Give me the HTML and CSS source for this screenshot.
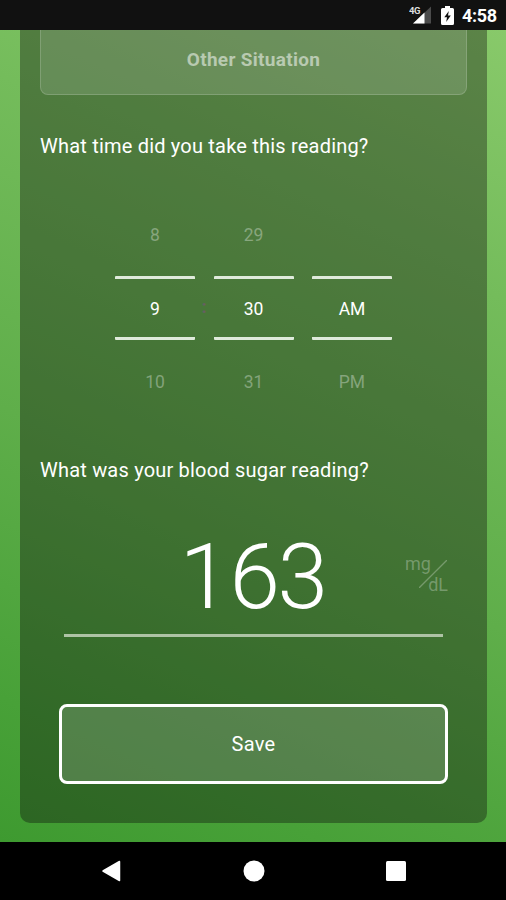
FILE: index.html
```html
<!DOCTYPE html>
<html lang="en">
<head>
<meta charset="utf-8">
<title>Blood sugar reading</title>
<link rel="stylesheet" href="styles.css">
</head>
<body>
<header class="status">
  <svg class="signal" width="24" height="20" viewBox="0 0 24 20">
    <path d="M4 18.500 22 1.500V18.500Z" fill="#4b4b4b"/>
    <path d="M4 18.500 15.500 7.500V18.500Z" fill="#fff"/>
    <text x="0" y="8.500" class="network">4G</text>
  </svg>
  <svg class="battery" width="13" height="19" viewBox="0 0 13 19">
    <path d="M4 0h5v2h2.500q1.500 0 1.500 1.500v14q0 1.500-1.500 1.500h-10Q0 19 0 17.500v-14Q0 2 1.500 2H4Z" fill="#fff"/>
    <path d="M7.800 5 3.300 11.200H6L5.200 16 9.800 9.600H7Z" fill="#111"/>
  </svg>
  <span class="clock">4:58</span>
</header>
<main class="screen">
  <section class="card">
    <button class="option">Other Situation</button>
    <h2 class="question">What time did you take this reading?</h2>
    <div class="picker">
      <div class="wheel"><span>8</span><b>9</b><span>10</span></div>
      <i class="colon">:</i>
      <div class="wheel"><span>29</span><b>30</b><span>31</span></div>
      <i class="colon"></i>
      <div class="wheel"><span></span><b>AM</b><span>PM</span></div>
    </div>
    <h2 class="question second">What was your blood sugar reading?</h2>
    <div class="reading">
      <span class="value"><span class="lead">1</span>63</span>
      <div class="unit">
        <span class="mg">mg</span><span class="dl">dL</span>
        <svg class="slash" width="28" height="28" viewBox="0 0 28 28"><path d="M0 28 28 0" stroke="currentColor" stroke-width="1.300"/></svg>
      </div>
    </div>
    <button class="save">Save</button>
  </section>
</main>
<nav class="nav">
  <svg width="20" height="22" viewBox="0 0 20 22"><path d="M18.500 1.500V20.500L2 11Z" fill="#fff" stroke="#fff" stroke-width="1.500" stroke-linejoin="round"/></svg>
  <svg width="22" height="22" viewBox="0 0 22 22"><circle cx="11" cy="11" r="10.500" fill="#fff"/></svg>
  <svg width="20" height="20" viewBox="0 0 20 20"><rect width="20" height="20" rx="1.500" fill="#fff"/></svg>
</nav>
</body>
</html>
```

FILE: styles.css
```css
* { box-sizing: border-box; }
body {
  margin: 0;
  width: 506px;
  height: 900px;
  overflow: hidden;
  display: flex;
  flex-direction: column;
  font-family: Roboto, "Liberation Sans", sans-serif;
  color: #fff;
  background: #000;
}
button { font-family: inherit; color: inherit; padding: 0; }
.status {
  height: 30px;
  flex: none;
  background: #111;
  display: flex;
  justify-content: flex-end;
  align-items: center;
  padding-right: 9px;
}
.signal { margin-right: 8px; }
.network { font: bold 9.500px Roboto, sans-serif; fill: #ddd; letter-spacing: -.5px; }
.battery { margin-right: 8px; }
.clock { font-size: 18px; font-weight: 700; line-height: 30px; width: 35px; letter-spacing: -.3px; padding-top: 1px; }
.screen {
  height: 812px;
  flex: none;
  padding: 0 19px 19px 20px;
  background: linear-gradient(204deg, #88c96a 0%, #74bc5b 26%, #5fae4a 58%, #48a138 86%, #3e9a30 100%);
}
.card {
  height: 793px;
  padding: 0 20px;
  border-radius: 0 0 10px 10px;
  background: rgba(10, 4, 8, .35);
  display: flex;
  flex-direction: column;
}
.option {
  height: 65px;
  flex: none;
  border: 1px solid rgba(255, 255, 255, .17);
  border-top: 0;
  border-radius: 0 0 8px 8px;
  background: rgba(255, 255, 255, .13);
  color: rgba(255, 255, 255, .53);
  font-size: 19px;
  font-weight: 700;
  letter-spacing: .3px;
  padding-bottom: 6px;
}
.question {
  margin: 37px 0 0;
  height: 28px;
  line-height: 28px;
  font-size: 20px;
  font-weight: 400;
  letter-spacing: .2px;
  white-space: nowrap;
}
.picker {
  margin-top: 37px;
  height: 222px;
  display: flex;
  justify-content: center;
}
.wheel {
  width: 80px;
  display: flex;
  flex-direction: column;
  align-items: center;
  font-size: 17.500px;
}
.wheel span {
  height: 79px;
  width: 100%;
  line-height: 76px;
  text-align: center;
  color: rgba(255, 255, 255, .34);
}
.wheel b {
  height: 64px;
  width: 100%;
  font-weight: 400;
  line-height: 60px;
  text-align: center;
  border: solid #dfeadb;
  border-width: 3px 0;
  border-radius: 1px;
}
.wheel b + span { line-height: 85px; }
.colon {
  width: 18.500px;
  font-style: normal;
  font-size: 19px;
  font-weight: 700;
  line-height: 220px;
  text-align: center;
  color: #665f61;
}
.second { margin-top: 37px; }
.reading {
  margin: 36px 24px 0;
  height: 117px;
  display: flex;
  justify-content: center;
  border-bottom: 3px solid #aec3a5;
  position: relative;
}
.value { font-size: 91px; font-weight: 300; line-height: 115px; letter-spacing: -2.500px; }
.lead { position: relative; left: -2px; }
.unit {
  position: absolute;
  right: -5px;
  top: 33px;
  width: 43px;
  height: 44px;
  display: flex;
  flex-direction: column;
  font-size: 18px;
  line-height: 21px;
  color: rgba(255, 255, 255, .28);
}
.dl { align-self: flex-end; }
.slash { position: absolute; left: 14px; top: 7px; }
.save {
  margin: 67px 19px 0;
  height: 80px;
  flex: none;
  border: 3px solid #fff;
  border-radius: 8px;
  background: rgba(255, 255, 255, .16);
  font-size: 20px;
  letter-spacing: .3px;
}
.nav {
  height: 58px;
  flex: none;
  display: flex;
  justify-content: space-between;
  align-items: center;
  padding: 0 100px 0 101px;
}
```
